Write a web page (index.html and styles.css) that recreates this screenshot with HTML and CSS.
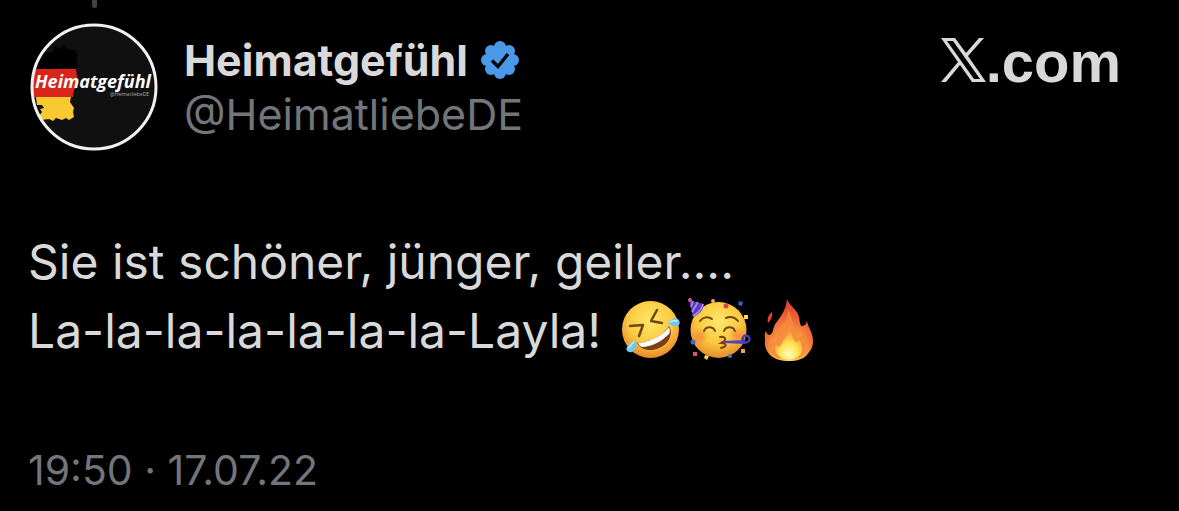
FILE: index.html
```html
<!DOCTYPE html>
<html lang="de">
<head>
    <meta charset="UTF-8">
    <meta name="viewport" content="width=device-width, initial-scale=1.0">
    <title>Heimatgefühl</title>
    <link rel="stylesheet" href="styles.css">
</head>
<body>
    <article class="post">
        <header class="post-header">
            <div class="avatar-column">
                <div class="thread-line"></div>
                <svg class="avatar" viewBox="0 0 128 128" role="img" aria-label="Heimatgefühl">
                    <defs>
                        <clipPath id="avatar-clip"><circle cx="64" cy="64" r="62"/></clipPath>
                    </defs>
                    <g clip-path="url(#avatar-clip)">
                        <rect width="128" height="128" fill="#101011"/>
                        <path d="M0 48V36l10-4 6-3 6 1 3-7 5 3 4-4 4 4 6 1 4 5-2 6 2 6z" fill="#000"/>
                        <path d="M0 46h46l1 8 1 8-4 5-1 7H0z" fill="#d92419"/>
                        <path d="M6 74h35l-1 5 4 6-1 4 1 5-5 3-3-2-4 2-6-2-3 3-4-2-8 1-2-4 3-4-2-3 4-1-2-3-5 0z" fill="#f9c931"/>
                        <text class="avatar-name" x="5" y="65">Heimatgefühl</text>
                        <text class="avatar-handle" x="80" y="73">@HeimatliebeDE</text>
                    </g>
                    <circle cx="64" cy="64" r="62" fill="none" stroke="#f1f1f1" stroke-width="3"/>
                </svg>
            </div>
            <div class="author">
                <div class="name-row">
                    <span class="name">Heimatgefühl</span>
                    <svg class="badge" viewBox="0 0 40 40" role="img" aria-label="Verifiziert">
                        <g fill="#4a99e9">
                            <circle cx="20" cy="20" r="15"/>
                            <circle cx="20" cy="7" r="6"/>
                            <circle cx="29" cy="11" r="6"/>
                            <circle cx="33" cy="20" r="6"/>
                            <circle cx="29" cy="29" r="6"/>
                            <circle cx="20" cy="33" r="6"/>
                            <circle cx="11" cy="29" r="6"/>
                            <circle cx="7" cy="20" r="6"/>
                            <circle cx="11" cy="11" r="6"/>
                        </g>
                        <path d="M12 20.500l6 6L28 14" fill="none" stroke="#000" stroke-width="3.500"/>
                    </svg>
                </div>
                <div class="handle">@HeimatliebeDE</div>
            </div>
            <div class="brand">
                <svg class="brand-x" viewBox="0 0 46 44" role="img" aria-label="X">
                    <path d="M1 0h14l11 15L39 0h5L28 18l18 26H32L20 27 6 44H1l17-20zM7 3l27 38h6L13 3z" fill="#d9d9d9" fill-rule="evenodd"/>
                </svg>
                <span>.com</span>
            </div>
        </header>

        <p class="post-text">Sie ist schöner, jünger, geiler....<br>La-la-la-la-la-la-la-Layla!
            <span class="emojis">
                <svg class="emoji" viewBox="0 0 64 64" role="img" aria-label="Lachen">
                    <defs>
                        <radialGradient id="face" cx="50%" cy="35%" r="65%">
                            <stop offset="0" stop-color="#ffe869"/>
                            <stop offset="0.6" stop-color="#fbc940"/>
                            <stop offset="1" stop-color="#e8892b"/>
                        </radialGradient>
                    </defs>
                    <circle cx="31.500" cy="31.500" r="28.500" fill="url(#face)"/>
                    <path d="M11 28l13-1-4 11M38 12l-6 11 11 2" fill="none" stroke="#70470f" stroke-width="2.500" stroke-linecap="round" stroke-linejoin="round"/>
                    <path d="M18 45C31 44 44 38 50 28c5 8-1 19-10 22-9 4-18 2-22-5z" fill="#7a3d15"/>
                    <path d="M19 45c12-1 24-7 31-16 1 3 1 5 0 7-8 8-18 13-27 13-2-1-3-2-4-4z" fill="#fff"/>
                    <path d="M49 25c3-4 7-6 10-4 3 3 2 7-2 7-3 1-5-1-8-3zM17 42c1 5 0 10-4 12-4 1-7-2-5-5 1-3 5-5 9-7z" fill="#6fc8ee"/>
                    <path d="M51 24c3-2 5-2 7-1M15 44c-3 2-4 4-5 6" fill="none" stroke="#c8f2ff" stroke-width="1.500" stroke-linecap="round"/>
                </svg>
                <svg class="emoji" viewBox="0 0 64 64" role="img" aria-label="Party">
                    <defs>
                        <radialGradient id="blush">
                            <stop offset="0" stop-color="#f57a3a" stop-opacity="0.7"/>
                            <stop offset="1" stop-color="#f57a3a" stop-opacity="0"/>
                        </radialGradient>
                    </defs>
                    <circle cx="30.500" cy="32" r="28" fill="url(#face)"/>
                    <circle cx="12" cy="38" r="9" fill="url(#blush)"/>
                    <circle cx="49" cy="37" r="9" fill="url(#blush)"/>
                    <path d="M1 2l15 4c0 5-5 11-11 13z" fill="#5b3fc0"/>
                    <path d="M5 3L3 9M10 4L4 14M15 6c-1 5-5 9-10 12" fill="none" stroke="#b98af0" stroke-width="1.500"/>
                    <circle cx="2" cy="2" r="2" fill="#d655a5"/>
                    <path d="M12 23c3-4 8-5 12-2M38 20c4-2 9-1 12 3M16 33c2-5 9-5 11 0M36 33c2-5 9-5 11 0" fill="none" stroke="#70470f" stroke-width="2" stroke-linecap="round"/>
                    <path d="M32 39c4-1 7 2 4 4l-3 2c5 0 6 3 3 4l-3 1" fill="none" stroke="#80400f" stroke-width="2" stroke-linecap="round"/>
                    <path d="M35 43l22-1v4l-22-1z" fill="#5142c4"/>
                    <circle cx="58" cy="41" r="3.500" fill="none" stroke="#493ab5" stroke-width="2.500"/>
                    <circle cx="25" cy="3" r="2" fill="#f5a94d"/>
                    <circle cx="38" cy="8" r="2.500" fill="#d9443f"/>
                    <path d="M51 3l4 1-1 4-4-1z" fill="#395eb8"/>
                    <path d="M56 17h4v4h-4z" fill="#f6dc65"/>
                    <circle cx="5" cy="44" r="2.500" fill="#3d6bc4"/>
                    <path d="M5 54l4 0 0 4-4 0z" fill="#d55370"/>
                    <path d="M17 57l4 1-2 4-3-2z" fill="#f4d64d"/>
                    <circle cx="42" cy="58" r="2" fill="#3a82b5"/>
                    <path d="M53 51h4v4h-4z" fill="#ef9f45"/>
                </svg>
                <svg class="emoji" viewBox="0 0 64 64" role="img" aria-label="Feuer">
                    <defs>
                        <radialGradient id="flame" cx="50%" cy="88%" r="75%">
                            <stop offset="0" stop-color="#fff36b"/>
                            <stop offset="0.35" stop-color="#fbb03c"/>
                            <stop offset="0.7" stop-color="#f0703a"/>
                            <stop offset="1" stop-color="#e3492f"/>
                        </radialGradient>
                        <radialGradient id="core" cx="50%" cy="85%" r="70%">
                            <stop offset="0" stop-color="#fffcc0"/>
                            <stop offset="0.5" stop-color="#ffe453"/>
                            <stop offset="1" stop-color="#f99a3c"/>
                        </radialGradient>
                    </defs>
                    <path d="M30 1c2 6 8 9 11 15 2 4 1 8 3 12 4 0 5-2 6-5 1 7 6 11 6 20 0 7-3 10-6 14-4 4-10 6-18 6s-14-2-18-5c-4-4-7-9-6-16 0-4-1-5 1-9 1 3 2 4 4 4 4-2 2-7 6-12 4-6 10-12 11-24z" fill="url(#flame)"/>
                    <path d="M15 14c1 4-1 8-4 11-1-4 0-8 4-11z" fill="#df422e"/>
                    <path d="M31 12c5 7 3 12 7 18 1 4 1 8 3 10 4-1 5-3 6-6 4 10 4 18-2 24-6 5-21 5-27 0-5-4-7-10-5-16 2 2 3 3 5 2 4-3 0-8 4-14 4-5 9-9 9-18z" fill="#f58a3e" opacity="0.8"/>
                    <path d="M32 29c3 5 2 9 6 14 1 2 3 1 4-2 4 7 4 13 0 17-5 5-16 5-20 0-4-3-4-7-3-11 2 2 4 2 5 0 2-5 8-9 8-18z" fill="url(#core)"/>
                </svg>
            </span>
        </p>

        <time class="post-time" datetime="2022-07-17T19:50">19:50 · 17.07.22</time>
    </article>
</body>
</html>
```
FILE: styles.css
```css
body {
    margin: 0;
    background-color: #000;
    color: #d9d9d9;
    font-family: Inter, "Open Sans", sans-serif;
}

.post {
    padding: 0 58px 10px 28px;
}

.post-header {
    display: flex;
    align-items: flex-start;
    gap: 26px;
}

.avatar-column {
    display: flex;
    flex-direction: column;
    align-items: center;
    gap: 15px;
    padding-left: 2px;
}

.thread-line {
    width: 5px;
    height: 8px;
    border-radius: 0 0 3px 3px;
    background-color: #3e4044;
}

.avatar {
    display: block;
    width: 128px;
    height: 128px;
}

.avatar-name {
    fill: #fff;
    font-family: "Open Sans", sans-serif;
    font-size: 18px;
    font-weight: 700;
    font-style: italic;
}

.avatar-handle {
    fill: #aaa;
    font-family: "Open Sans", sans-serif;
    font-size: 5px;
}

.author {
    padding-top: 33px;
    font-size: 43px;
    line-height: 54px;
}

.name-row {
    display: flex;
    align-items: center;
    gap: 12px;
}

.name {
    font-weight: 700;
}

.badge {
    width: 40px;
    height: 40px;
}

.handle {
    color: #72767a;
}

.brand {
    display: flex;
    align-items: baseline;
    margin-left: auto;
    padding-top: 28px;
    font-family: "Liberation Sans", Arial, sans-serif;
    font-size: 58px;
    font-weight: 700;
    line-height: 68px;
}

.brand-x {
    width: 46px;
    height: 44px;
}

.post-text {
    margin: 76px 0 0;
    font-size: 48px;
    line-height: 69px;
}

.emojis {
    display: inline-flex;
    gap: 5px;
    margin-left: 4px;
    vertical-align: -14px;
}

.emoji {
    width: 64px;
    height: 64px;
}

.post-time {
    display: block;
    margin-top: 75px;
    color: #72767a;
    font-size: 41px;
    line-height: 60px;
}
```
